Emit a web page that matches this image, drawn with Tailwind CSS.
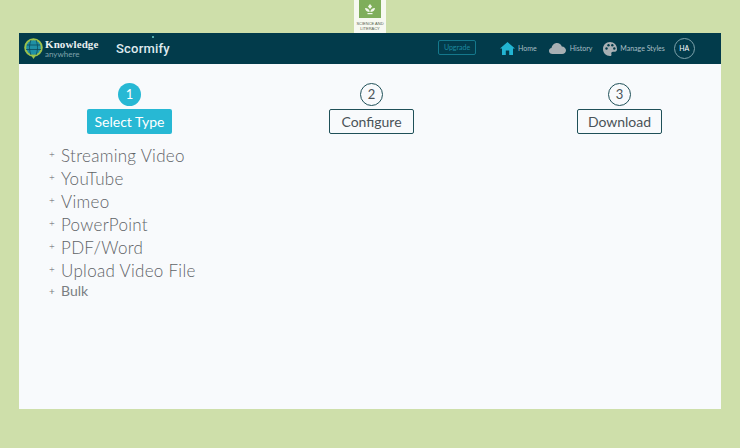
<!DOCTYPE html>
<html lang="en">
<head>
    <meta charset="UTF-8">
    <meta name="viewport" content="width=device-width, initial-scale=1.0">
    <title>Scormify</title>
    <script src="https://cdn.jsdelivr.net/npm/@tailwindcss/browser@4"></script>
</head>
<body class="bg-[#cedfaa] h-[448px] overflow-hidden font-['Lato','Liberation_Sans',sans-serif]">

    <!-- Partner tile -->
    <div class="flex justify-center h-[33px]">
        <div class="w-[32px] bg-[#f7f9f1] flex flex-col items-center">
            <div class="w-[22px] h-[18px] bg-[#7fae5b] flex items-center justify-center">
                <svg width="12" height="12" viewBox="0 0 12 12" fill="#f4f8ee">
                    <path d="M6 1 L8 3.5 L6 6 L4 3.5 Z"/>
                    <path d="M1 5 C3.5 5 5.5 6.5 5.7 9 C3 9 1.3 7.500 1 5 Z"/>
                    <path d="M11 5 C8.500 5 6.500 6.500 6.300 9 C9 9 10.700 7.500 11 5 Z"/>
                    <rect x="3.500" y="10" width="5" height="1.200"/>
                </svg>
            </div>
            <div class="text-[4px] leading-[5px] mt-[3px] text-center text-[#55604c] font-['Liberation_Sans',sans-serif]">SCIENCE AND<br>LITERACY</div>
        </div>
    </div>

    <!-- Main panel -->
    <div class="mx-[19px] w-[702px] h-[376px] bg-[#f8fafc]">
        <header class="h-[31px] bg-[#023b4b] flex items-center text-white relative">
            <!-- Logo -->
            <svg class="ml-[5px]" width="19" height="22" viewBox="0 0 19 22">
                <circle cx="9.500" cy="9.500" r="8.300" fill="#1f8fa5" stroke="#9cc14a" stroke-width="2"/>
                <path d="M3 7 H16 M2 11.500 H17 M7 2 C5 7 5 12 7 17 M12 2 C14 7 14 12 12 17" fill="none" stroke="#0b4a5c" stroke-width="0.800"/>
                <path d="M7.500 18 H11.500 L9.500 21 Z" fill="#9cc14a"/>
            </svg>
            <div class="ml-[2px] w-[54px]">
                <div class="text-[11px] leading-[11px] font-bold tracking-[0.1px] font-['Liberation_Serif',serif] text-[#e8eff0]">Knowledge</div>
                <div class="text-[8px] leading-[8px] text-[#7fa3ac]">anywhere</div>
            </div>
            <div class="ml-[17px] text-[13px] font-medium tracking-[0.2px] text-[#dfeaee] font-['Roboto',sans-serif] relative">
                Scormify
                <span class="absolute left-[36px] -top-[3px] w-[2px] h-[2px] bg-[#4fa7a8]"></span>
            </div>

            <!-- Right nav -->
            <div class="absolute left-[419px] top-[7px] w-[38px] h-[15px] border border-[#14788c] rounded-[2px] flex items-center justify-center text-[7px] text-[#1d8aa0]">Upgrade</div>
            <nav class="absolute left-[481px] top-0 h-full flex items-center text-[7px] text-[#a9bfc5]">
                <svg width="15" height="13" viewBox="0 0 15 13" fill="#22b5d3">
                    <path d="M7.500 0 L15 6.500 L13 6.500 L13 13 L9.200 13 L9.200 8.500 L5.800 8.500 L5.800 13 L2 13 L2 6.500 L0 6.500 Z"/>
                </svg>
                <span class="ml-[3px]">Home</span>
                <svg class="ml-[12px]" width="17" height="11" viewBox="0 0 17 11" fill="#a8b0b4">
                    <path d="M3.500 11 C1.500 11 0 9.700 0 8 C0 6.500 1 5.400 2.500 5.100 C3 2.200 5.200 0 8 0 C10.300 0 12.100 1.400 12.800 3.400 C15.200 3.500 17 5.200 17 7.300 C17 9.400 15.300 11 13.200 11 Z"/>
                </svg>
                <span class="ml-[4px]">History</span>
                <svg class="ml-[11px]" width="14" height="14" viewBox="0 0 14 14">
                    <path d="M7 0 C3 0 0 3 0 7 C0 11 3 14 7 14 C8.200 14 8.800 13.200 8.400 12.200 C8 11 8.600 9.800 10 9.800 L12 9.800 C13.200 9.800 14 8.800 14 7 C14 3 11 0 7 0 Z" fill="#a8b0b4"/>
                    <circle cx="3.500" cy="6.500" r="1.200" fill="#023b4b"/>
                    <circle cx="5.500" cy="3.300" r="1.200" fill="#023b4b"/>
                    <circle cx="9.300" cy="3.300" r="1.200" fill="#023b4b"/>
                    <circle cx="11.300" cy="6.500" r="1.200" fill="#023b4b"/>
                </svg>
                <span class="ml-[3px]">Manage Styles</span>
                <div class="ml-[9px] w-[21px] h-[21px] rounded-full border border-[#7fa3ac] flex items-center justify-center text-[7px] text-white">HA</div>
            </nav>
        </header>

        <!-- Steps -->
        <div class="flex pl-[68px] pt-[19px]">
            <div class="w-[85px] flex flex-col items-center">
                <div class="w-[23px] h-[23px] rounded-full bg-[#27b8d4] text-white text-[13px] flex items-center justify-center">1</div>
                <div class="mt-[3px] w-[85px] h-[25px] bg-[#27b8d4] rounded-[2px] text-white text-[14px] flex items-center justify-center">Select Type</div>
            </div>
            <div class="ml-[157px] w-[85px] flex flex-col items-center">
                <div class="w-[23px] h-[23px] rounded-full border border-[#1f5058] text-[#4a5358] text-[13px] flex items-center justify-center">2</div>
                <div class="mt-[3px] w-[85px] h-[25px] border border-[#1f5058] rounded-[2px] text-[#4a5358] text-[14px] flex items-center justify-center">Configure</div>
            </div>
            <div class="ml-[163px] w-[85px] flex flex-col items-center">
                <div class="w-[23px] h-[23px] rounded-full border border-[#1f5058] text-[#4a5358] text-[13px] flex items-center justify-center">3</div>
                <div class="mt-[3px] w-[85px] h-[25px] border border-[#1f5058] rounded-[2px] text-[#4a5358] text-[14px] flex items-center justify-center">Download</div>
            </div>
        </div>

        <!-- Types -->
        <ul class="mt-[10px] pl-[30px] text-[#5f6367] text-[17px] font-light tracking-[0.3px] leading-[23px]">
            <li class="flex"><span class="w-[12px] text-[10px] leading-[20px]">+</span>Streaming Video</li>
            <li class="flex"><span class="w-[12px] text-[10px] leading-[20px]">+</span>YouTube</li>
            <li class="flex"><span class="w-[12px] text-[10px] leading-[20px]">+</span>Vimeo</li>
            <li class="flex"><span class="w-[12px] text-[10px] leading-[20px]">+</span>PowerPoint</li>
            <li class="flex"><span class="w-[12px] text-[10px] leading-[20px]">+</span>PDF/Word</li>
            <li class="flex"><span class="w-[12px] text-[10px] leading-[20px]">+</span>Upload Video File</li>
            <li class="-mt-[1px] flex text-[14px] font-normal tracking-normal leading-[20px] text-[#7a7e82]"><span class="w-[12px] text-[10px] leading-[20px]">+</span>Bulk</li>
        </ul>
    </div>

</body>
</html>
